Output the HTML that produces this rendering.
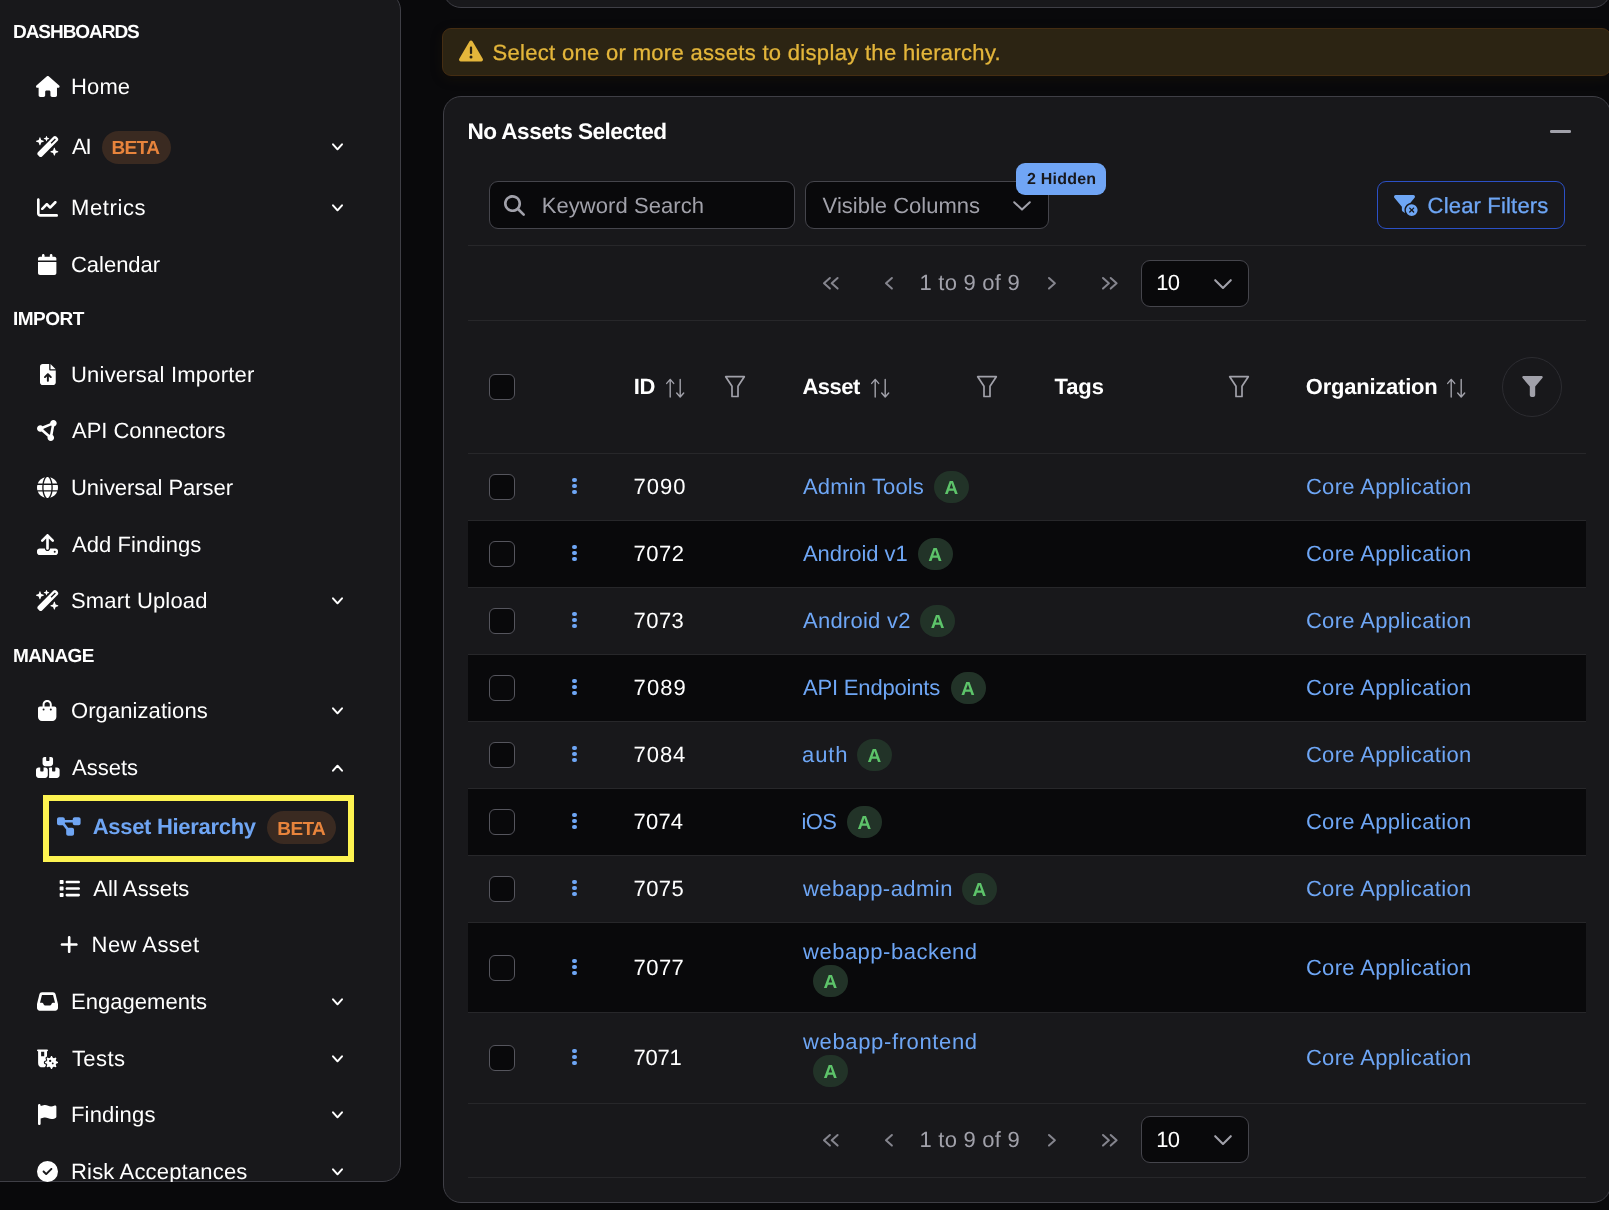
<!DOCTYPE html>
<html lang="en">
<head>
<meta charset="utf-8">
<title>Asset Hierarchy</title>
<style>
*{box-sizing:border-box;margin:0;padding:0}
html,body{width:1609px;height:1210px;overflow:hidden;background:#09090b}
body{position:relative;text-rendering:geometricPrecision;font-family:"Liberation Sans",Arial,sans-serif;color:#fff;font-size:22px}
a{color:inherit;text-decoration:none}
svg{display:block;overflow:visible}
#app{position:absolute;left:0;top:0;width:1609px;height:1210px;overflow:hidden;will-change:transform}
.abs{position:absolute}
/* ---------- sidebar ---------- */
#side{position:absolute;left:-2px;top:-8px;width:403px;height:1190px;background:#18181b;border:1px solid #3f3f46;border-radius:0 18px 18px 0}
.sec{position:absolute;left:13px;height:30px;line-height:30px;font-weight:700;font-size:19px;color:#fff;white-space:nowrap}
.ni{position:absolute;left:0;width:400px;height:40px;display:block;color:#fff;white-space:nowrap}
.ni .ic{position:absolute;left:34.5px;top:8px;width:26px;height:22px;display:flex;align-items:center;justify-content:center}
.ni .tx{position:absolute;left:71px;top:0;height:40px;line-height:40px}
.ni .chev{position:absolute;left:332px;top:15.5px}
.ni.sub .ic{left:56px}
.ni.sub .tx{left:92.6px}
.beta{position:absolute;top:4px;height:33px;width:68.5px;border-radius:17px;background:#3a2a21;color:#e8843c;font-weight:700;font-size:19px;line-height:35px;white-space:nowrap}
#hl{position:absolute;left:43px;top:795px;width:311px;height:67px;border:6px solid #fdf351}
/* ---------- main ---------- */
.card{position:absolute;background:#18181b;border:1px solid #3f3f46;border-radius:18px}
#warn{position:absolute;left:442px;top:28px;width:1169px;height:48px;background:#2c2413;border:1px solid #452d12;border-radius:9px;color:#e4b63b;box-shadow:0 3px 12px rgba(40,28,8,.28)}
.hr{position:absolute;left:468px;width:1118px;height:1px;background:#27272a}
.inp{position:absolute;background:#09090b;border:1px solid #45454c;border-radius:9px}
.t{position:absolute;white-space:nowrap;height:40px;line-height:40px}
.mut{color:#a1a1aa}
.lnk{color:#6ea6f5}
.b{font-weight:700}
.med{-webkit-text-stroke:0.3px currentColor}
.row{position:absolute;left:468px;width:1118px;border-bottom:1px solid #27272a}
.row.alt{background:#09090b}
.cb{position:absolute;left:21px;width:26px;height:26px;border:1px solid #55555d;border-radius:6px;background:#09090b}
.dots{position:absolute;left:103.5px;width:6px;height:17px}
.dots i{display:block;width:4.4px;height:4.4px;border-radius:2.2px;background:#6ea6f5;margin:0 0.8px 1.4px}
.ab{position:absolute;width:35px;height:32px;border-radius:16px;background:#223328;color:#5dc46a;font-weight:700;font-size:19px;line-height:36px;white-space:nowrap}
</style>
</head>
<body>
<div id="app">
<aside id="sidebar"><nav>
<div id="side"></div>
<div class="sec" style="top:18px"><span style="letter-spacing:-1.042px">DASHBOARDS</span></div>
<a class="ni" style="top:67px"><span class="ic"><svg width="23.62" height="21" viewBox="0 0 576 512" fill="currentColor"><path fill-rule="evenodd" d="M575.8 255.5c0 18-15 32.100-32 32.100h-32l.7 160.200c0 2.700-.2 5.400-.5 8.100V472c0 22.100-17.900 40-40 40H456c-1.100 0-2.200 0-3.300-.1c-1.400 .1-2.800 .1-4.200 .1H416 392c-22.100 0-40-17.900-40-40V448 384c0-17.700-14.300-32-32-32H256c-17.700 0-32 14.300-32 32v64 24c0 22.100-17.900 40-40 40H160 128.100c-1.500 0-3-.1-4.500-.2c-1.200 .1-2.400 .2-3.600 .2H104c-22.100 0-40-17.900-40-40V360c0-.9 0-1.900 .1-2.800V287.600H32c-18 0-32-14-32-32.100c0-9 3-17 10-24L266.400 8c7-7 15-8 22-8s15 2 21 7L564.800 231.500c8 7 12 15 11 24z"/></svg></span><span class="tx"><span style="letter-spacing:0.132px">Home</span></span></a>
<a class="ni" style="top:127px"><span class="ic"><svg width="23.62" height="21" viewBox="0 0 576 512" fill="currentColor"><path fill-rule="evenodd" d="M234.700 42.700L197 56.800c-3 1.100-5 4-5 7.200s2 6.100 5 7.200l37.700 14.100L248.800 123c1.100 3 4 5 7.200 5s6.100-2 7.200-5l14.100-37.700L315 71.200c3-1.100 5-4 5-7.200s-2-6.100-5-7.200L277.300 42.700 263.200 5c-1.100-3-4-5-7.200-5s-6.100 2-7.200 5L234.700 42.700zM46.100 395.400c-18.700 18.700-18.700 49.100 0 67.900l34.600 34.600c18.700 18.700 49.100 18.700 67.900 0L529.900 116.500c18.700-18.700 18.700-49.100 0-67.900L495.300 14.100c-18.700-18.700-49.100-18.700-67.900 0L46.100 395.400zM484.600 82.600l-105 105-23.300-23.300 105-105 23.300 23.300zM7.500 117.200C3 118.900 0 123.200 0 128s3 9.100 7.500 10.800L64 160l21.200 56.500c1.700 4.500 6 7.500 10.800 7.500s9.100-3 10.800-7.500L128 160l56.500-21.200c4.500-1.700 7.500-6 7.500-10.800s-3-9.100-7.500-10.800L128 96 106.800 39.500C105.100 35 100.800 32 96 32s-9.100 3-10.800 7.500L64 96 7.500 117.200zm352 256c-4.500 1.700-7.500 6-7.500 10.800s3 9.100 7.500 10.800L416 416l21.200 56.500c1.700 4.500 6 7.500 10.800 7.500s9.100-3 10.800-7.500L480 416l56.500-21.200c4.500-1.700 7.500-6 7.500-10.800s-3-9.100-7.500-10.800L480 352l-21.200-56.500c-1.700-4.500-6-7.500-10.800-7.500s-9.100 3-10.800 7.500L416 352l-56.500 21.200z"/></svg></span><span class="tx"><span style="letter-spacing:-1.324px;margin-left:1.06px">AI</span></span><span class="beta" style="left:102px;line-height:35px"><span style="letter-spacing:-0.647px;margin-left:9.53px">BETA</span></span><svg class="chev" width="11" height="8" viewBox="0 0 11 8" fill="none" stroke="currentColor" stroke-width="2" stroke-linecap="round" stroke-linejoin="round"><path d="M1 1.3 L5.5 6.3 L10 1.3"/></svg></a>
<a class="ni" style="top:188px"><span class="ic"><svg width="21.00" height="21" viewBox="0 0 512 512" fill="currentColor"><path fill-rule="evenodd" d="M64 64c0-17.700-14.300-32-32-32S0 46.300 0 64V400c0 44.200 35.800 80 80 80H480c17.700 0 32-14.300 32-32s-14.300-32-32-32H80c-8.800 0-16-7.200-16-16V64zm406.600 86.600c12.500-12.500 12.500-32.800 0-45.300s-32.800-12.500-45.300 0L320 210.700l-57.400-57.400c-12.500-12.500-32.800-12.500-45.300 0l-112 112c-12.500 12.500-12.500 32.800 0 45.300s32.800 12.500 45.300 0L240 221.300l57.400 57.400c12.500 12.500 32.800 12.500 45.300 0l128-128z"/></svg></span><span class="tx"><span style="letter-spacing:0.618px">Metrics</span></span><svg class="chev" width="11" height="8" viewBox="0 0 11 8" fill="none" stroke="currentColor" stroke-width="2" stroke-linecap="round" stroke-linejoin="round"><path d="M1 1.3 L5.5 6.3 L10 1.3"/></svg></a>
<a class="ni" style="top:245px"><span class="ic"><svg width="18.38" height="21" viewBox="0 0 448 512" fill="currentColor"><path fill-rule="evenodd" d="M96 32V64H48C21.500 64 0 85.500 0 112v48H448V112c0-26.500-21.500-48-48-48H352V32c0-17.700-14.300-32-32-32s-32 14.300-32 32V64H160V32c0-17.700-14.300-32-32-32S96 14.300 96 32zM448 192H0V464c0 26.500 21.500 48 48 48H400c26.500 0 48-21.500 48-48V192z"/></svg></span><span class="tx"><span style="letter-spacing:-0.028px">Calendar</span></span></a>
<div class="sec" style="top:305px"><span style="letter-spacing:-0.523px">IMPORT</span></div>
<a class="ni" style="top:355px"><span class="ic"><svg width="15.75" height="21" viewBox="0 0 384 512" fill="currentColor"><path fill-rule="evenodd" d="M64 0C28.700 0 0 28.700 0 64V448c0 35.300 28.700 64 64 64H320c35.300 0 64-28.700 64-64V160H256c-17.700 0-32-14.300-32-32V0H64zM256 0V128H384L256 0zM216 408c0 13.300-10.700 24-24 24s-24-10.700-24-24V305.900l-31 31c-9.400 9.400-24.600 9.400-33.900 0s-9.400-24.600 0-33.900l72-72c9.400-9.400 24.600-9.400 33.900 0l72 72c9.400 9.400 9.400 24.600 0 33.900s-24.600 9.400-33.900 0l-31-31V408z"/></svg></span><span class="tx"><span style="letter-spacing:0.208px">Universal Importer</span></span></a>
<a class="ni" style="top:411px"><span class="ic"><svg width="21.00" height="21" viewBox="0 0 512 512" fill="currentColor"><path fill-rule="evenodd" d="M418.400 157.900c35.300-8.300 61.600-40 61.600-77.900c0-44.200-35.800-80-80-80c-43.400 0-78.700 34.500-80 77.500L136.200 151.100C121.700 136.800 101.900 128 80 128c-44.200 0-80 35.800-80 80s35.800 80 80 80c12.200 0 23.800-2.700 34.100-7.600L259.700 407.800c-2.400 7.600-3.700 15.800-3.700 24.200c0 44.200 35.800 80 80 80s80-35.800 80-80c0-27.700-14-52.100-35.400-66.400l37.800-207.700zM156.300 232.200c2.200-6.900 3.500-14.200 3.700-21.700l183.800-73.500c3.600 3.500 7.400 6.700 11.600 9.500L317.600 354.100c-5.500 1.300-10.800 3.100-15.800 5.500L156.300 232.200z"/></svg></span><span class="tx"><span style="letter-spacing:-0.042px;margin-left:1.06px">API Connectors</span></span></a>
<a class="ni" style="top:468px"><span class="ic"><svg width="21.00" height="21" viewBox="0 0 512 512" fill="currentColor"><path fill-rule="evenodd" d="M352 256c0 22.200-1.200 43.600-3.300 64H163.300c-2.200-20.400-3.300-41.800-3.300-64s1.200-43.600 3.300-64H348.700c2.200 20.400 3.300 41.800 3.300 64zm28.800-64H503.900c5.300 20.500 8.100 41.900 8.100 64s-2.800 43.500-8.100 64H380.800c2.100-20.600 3.200-42 3.200-64s-1.100-43.400-3.200-64zm112.600-32H376.700c-10-63.900-29.800-117.400-55.300-151.600c78.300 20.700 142 77.500 171.900 151.600zm-149.100 0H167.700c6.100-36.400 15.500-68.600 27-94.700c10.500-23.600 22.200-40.700 33.500-51.500C239.400 3.200 248.700 0 256 0s16.600 3.200 27.800 13.800c11.300 10.800 23 27.900 33.500 51.500c11.600 26 20.900 58.200 27 94.700zm-209 0H18.600C48.600 85.900 112.200 29.100 190.600 8.400C165.100 42.600 145.300 96.100 135.300 160zM8.100 192H131.200c-2.100 20.600-3.200 42-3.200 64s1.100 43.400 3.200 64H8.100C2.800 299.500 0 278.100 0 256s2.800-43.500 8.100-64zM194.700 446.600c-11.600-26-20.900-58.200-27-94.600H344.300c-6.100 36.400-15.500 68.600-27 94.600c-10.500 23.600-22.200 40.700-33.500 51.500C272.600 508.800 263.300 512 256 512s-16.600-3.200-27.800-13.800c-11.300-10.800-23-27.900-33.500-51.500zM135.300 352c10 63.900 29.800 117.400 55.300 151.600C112.200 482.900 48.600 426.100 18.600 352H135.300zm358.100 0c-30 74.100-93.600 130.900-171.900 151.600c25.500-34.200 45.200-87.700 55.300-151.600H493.400z"/></svg></span><span class="tx"><span style="letter-spacing:-0.036px">Universal Parser</span></span></a>
<a class="ni" style="top:525px"><span class="ic"><svg width="21.00" height="21" viewBox="0 0 512 512" fill="currentColor"><path fill-rule="evenodd" d="M288 109.300V352c0 17.700-14.300 32-32 32s-32-14.300-32-32V109.300l-73.400 73.400c-12.500 12.500-32.800 12.500-45.300 0s-12.500-32.800 0-45.300l128-128c12.500-12.500 32.800-12.500 45.300 0l128 128c12.500 12.500 12.500 32.800 0 45.300s-32.800 12.500-45.300 0L288 109.300zM64 352H192c0 35.300 28.700 64 64 64s64-28.700 64-64H448c35.300 0 64 28.700 64 64v32c0 35.300-28.700 64-64 64H64c-35.300 0-64-28.700-64-64V416c0-35.300 28.700-64 64-64zM432 456a24 24 0 1 0 0-48 24 24 0 1 0 0 48z"/></svg></span><span class="tx"><span style="letter-spacing:0.074px;margin-left:1.06px">Add Findings</span></span></a>
<a class="ni" style="top:581px"><span class="ic"><svg width="23.62" height="21" viewBox="0 0 576 512" fill="currentColor"><path fill-rule="evenodd" d="M234.700 42.700L197 56.800c-3 1.100-5 4-5 7.200s2 6.100 5 7.200l37.700 14.100L248.800 123c1.100 3 4 5 7.200 5s6.100-2 7.200-5l14.100-37.700L315 71.200c3-1.100 5-4 5-7.200s-2-6.100-5-7.200L277.300 42.700 263.200 5c-1.100-3-4-5-7.200-5s-6.100 2-7.200 5L234.700 42.700zM46.100 395.400c-18.700 18.700-18.700 49.100 0 67.900l34.600 34.600c18.700 18.700 49.100 18.700 67.900 0L529.900 116.500c18.700-18.700 18.700-49.100 0-67.900L495.300 14.100c-18.700-18.700-49.100-18.700-67.900 0L46.100 395.400zM484.600 82.600l-105 105-23.300-23.300 105-105 23.300 23.300zM7.500 117.200C3 118.900 0 123.200 0 128s3 9.100 7.500 10.800L64 160l21.200 56.500c1.700 4.500 6 7.500 10.800 7.500s9.100-3 10.800-7.500L128 160l56.500-21.200c4.500-1.700 7.500-6 7.500-10.800s-3-9.100-7.500-10.800L128 96 106.800 39.500C105.100 35 100.800 32 96 32s-9.100 3-10.800 7.500L64 96 7.500 117.200zm352 256c-4.500 1.700-7.500 6-7.500 10.800s3 9.100 7.500 10.800L416 416l21.200 56.500c1.700 4.500 6 7.500 10.800 7.500s9.100-3 10.800-7.500L480 416l56.500-21.200c4.500-1.700 7.500-6 7.500-10.800s-3-9.100-7.500-10.800L480 352l-21.200-56.500c-1.700-4.500-6-7.500-10.800-7.500s-9.100 3-10.800 7.500L416 352l-56.500 21.200z"/></svg></span><span class="tx"><span style="letter-spacing:0.182px">Smart Upload</span></span><svg class="chev" width="11" height="8" viewBox="0 0 11 8" fill="none" stroke="currentColor" stroke-width="2" stroke-linecap="round" stroke-linejoin="round"><path d="M1 1.3 L5.5 6.3 L10 1.3"/></svg></a>
<div class="sec" style="top:642px"><span style="letter-spacing:-0.628px">MANAGE</span></div>
<a class="ni" style="top:691px"><span class="ic"><svg width="18.38" height="21" viewBox="0 0 448 512" fill="currentColor"><path fill-rule="evenodd" d="M160 112c0-35.300 28.700-64 64-64s64 28.700 64 64v48H160V112zm-48 48H48c-26.500 0-48 21.500-48 48V416c0 53 43 96 96 96H352c53 0 96-43 96-96V208c0-26.500-21.500-48-48-48H336V112C336 50.100 285.900 0 224 0S112 50.100 112 112v48zm24 48a24 24 0 1 1 0 48 24 24 0 1 1 0-48zm152 24a24 24 0 1 1 48 0 24 24 0 1 1 -48 0z"/></svg></span><span class="tx"><span style="letter-spacing:0.082px">Organizations</span></span><svg class="chev" width="11" height="8" viewBox="0 0 11 8" fill="none" stroke="currentColor" stroke-width="2" stroke-linecap="round" stroke-linejoin="round"><path d="M1 1.3 L5.5 6.3 L10 1.3"/></svg></a>
<a class="ni" style="top:748px"><span class="ic"><svg width="23.62" height="21" viewBox="0 0 576 512" fill="currentColor"><path fill-rule="evenodd" d="M248 0H208c-26.500 0-48 21.500-48 48V160c0 35.300 28.700 64 64 64H352c35.300 0 64-28.700 64-64V48c0-26.500-21.500-48-48-48H328V80c0 8.800-7.200 16-16 16H264c-8.800 0-16-7.200-16-16V0zM64 256c-35.300 0-64 28.700-64 64V448c0 35.300 28.700 64 64 64H224c35.300 0 64-28.700 64-64V320c0-35.300-28.700-64-64-64H184v80c0 8.800-7.200 16-16 16H120c-8.800 0-16-7.200-16-16V256H64zM352 512H512c35.300 0 64-28.700 64-64V320c0-35.300-28.700-64-64-64H472v80c0 8.800-7.200 16-16 16H408c-8.800 0-16-7.200-16-16V256H352c-15 0-28.800 5.100-39.700 13.800c4.900 10.400 7.700 22 7.700 34.200V464c0 12.200-2.800 23.800-7.700 34.200C323.200 506.900 337 512 352 512z"/></svg></span><span class="tx"><span style="letter-spacing:0.001px;margin-left:1.06px">Assets</span></span><svg class="chev" width="11" height="8" viewBox="0 0 11 8" fill="none" stroke="currentColor" stroke-width="2" stroke-linecap="round" stroke-linejoin="round"><path d="M1 6.7 L5.5 1.7 L10 6.7"/></svg></a>
<div id="hl"></div>
<a class="ni sub" style="top:807px;color:#6fa5f3"><span class="ic"><svg width="23.62" height="21" viewBox="0 0 576 512" fill="currentColor"><path fill-rule="evenodd" d="M0 80C0 53.500 21.500 32 48 32h96c26.500 0 48 21.500 48 48V96H384V80c0-26.500 21.500-48 48-48h96c26.500 0 48 21.500 48 48v96c0 26.500-21.500 48-48 48H432c-26.500 0-48-21.500-48-48V160H192v16c0 1.700-.1 3.400-.3 5L272 288h96c26.500 0 48 21.500 48 48v96c0 26.500-21.500 48-48 48H272c-26.500 0-48-21.500-48-48V336c0-1.700 .1-3.400 .3-5L144 224H48c-26.500 0-48-21.500-48-48V80z"/></svg></span><span class="tx b"><span style="letter-spacing:-0.291px;margin-left:0.06px">Asset Hierarchy</span></span><span class="beta" style="left:267px;line-height:37px"><span style="letter-spacing:-0.647px;margin-left:10.33px">BETA</span></span></a>
<a class="ni sub" style="top:869px"><span class="ic"><svg width="21.00" height="21" viewBox="0 0 512 512" fill="currentColor"><path fill-rule="evenodd" d="M40 48C26.700 48 16 58.700 16 72v48c0 13.300 10.700 24 24 24H88c13.300 0 24-10.700 24-24V72c0-13.300-10.700-24-24-24H40zM192 64c-17.700 0-32 14.300-32 32s14.300 32 32 32H480c17.700 0 32-14.300 32-32s-14.300-32-32-32H192zm0 160c-17.700 0-32 14.300-32 32s14.300 32 32 32H480c17.700 0 32-14.300 32-32s-14.300-32-32-32H192zm0 160c-17.700 0-32 14.300-32 32s14.300 32 32 32H480c17.700 0 32-14.300 32-32s-14.300-32-32-32H192zM16 232v48c0 13.300 10.700 24 24 24H88c13.300 0 24-10.700 24-24V232c0-13.300-10.700-24-24-24H40c-13.300 0-24 10.700-24 24zM40 368c-13.300 0-24 10.700-24 24v48c0 13.300 10.700 24 24 24H88c13.300 0 24-10.700 24-24V392c0-13.300-10.700-24-24-24H40z"/></svg></span><span class="tx"><span style="letter-spacing:0.096px;margin-left:0.56px">All Assets</span></span></a>
<a class="ni sub" style="top:925px"><span class="ic"><svg width="18.38" height="21" viewBox="0 0 448 512" fill="currentColor"><path fill-rule="evenodd" d="M256 80c0-17.700-14.300-32-32-32s-32 14.300-32 32V224H48c-17.700 0-32 14.300-32 32s14.300 32 32 32H192V432c0 17.700 14.300 32 32 32s32-14.300 32-32V288H400c17.700 0 32-14.300 32-32s-14.300-32-32-32H256V80z"/></svg></span><span class="tx"><span style="letter-spacing:0.441px;margin-left:-1.00px">New Asset</span></span></a>
<a class="ni" style="top:982px"><span class="ic"><svg width="21.00" height="21" viewBox="0 0 512 512" fill="currentColor"><path fill-rule="evenodd" d="M121 32C91.600 32 66 52 58.900 80.500L1.900 308.400C.6 313.500 0 318.700 0 323.900V416c0 35.300 28.700 64 64 64H448c35.300 0 64-28.700 64-64V323.900c0-5.200-.6-10.400-1.900-15.500l-57-227.900C446 52 420.400 32 391 32H121zm0 64H391l48 192H387.800c-12.100 0-23.200 6.800-28.600 17.700l-14.300 28.600c-5.400 10.800-16.500 17.700-28.600 17.700H195.800c-12.100 0-23.200-6.800-28.600-17.700l-14.300-28.600c-5.400-10.800-16.500-17.700-28.600-17.700H73L121 96z"/></svg></span><span class="tx"><span style="letter-spacing:0.033px">Engagements</span></span><svg class="chev" width="11" height="8" viewBox="0 0 11 8" fill="none" stroke="currentColor" stroke-width="2" stroke-linecap="round" stroke-linejoin="round"><path d="M1 1.3 L5.5 6.3 L10 1.3"/></svg></a>
<a class="ni" style="top:1039px"><span class="ic"><svg width="21" height="21" viewBox="0 0 512 512"><path fill="currentColor" fill-rule="evenodd" d="M22 34 H246 Q268 34 268 56 Q268 78 246 78 H244 V364 Q244 472 136 472 Q27 472 27 364 V78 H22 Q0 78 0 56 Q0 34 22 34 Z M100 92 V202 H176 V92 Z"/><path fill="currentColor" stroke="#18181b" stroke-width="56" stroke-linejoin="round" paint-order="stroke" d="M343 194 L365 194 L395 254 L458 233 L473 248 L452 311 L512 341 L512 363 L452 393 L473 456 L458 471 L395 450 L365 510 L343 510 L313 450 L250 471 L235 456 L256 393 L196 363 L196 341 L256 311 L235 248 L250 233 L313 254 Z"/><circle cx="354" cy="352" r="112" fill="currentColor"/><circle cx="321" cy="314" r="28" fill="#18181b"/><circle cx="384" cy="375" r="22" fill="#18181b"/></svg></span><span class="tx"><span style="letter-spacing:0.432px;margin-left:0.91px">Tests</span></span><svg class="chev" width="11" height="8" viewBox="0 0 11 8" fill="none" stroke="currentColor" stroke-width="2" stroke-linecap="round" stroke-linejoin="round"><path d="M1 1.3 L5.5 6.3 L10 1.3"/></svg></a>
<a class="ni" style="top:1095px"><span class="ic"><svg width="18.38" height="21" viewBox="0 0 448 512" fill="currentColor"><path fill-rule="evenodd" d="M64 32C64 14.300 49.700 0 32 0S0 14.300 0 32V64 368 480c0 17.700 14.300 32 32 32s32-14.300 32-32V352l64.300-16.100c41.100-10.300 84.600-5.500 122.500 13.400c44.200 22.100 95.500 24.800 141.700 7.400l34.700-13c12.500-4.700 20.800-16.600 20.800-30V66.100c0-23-24.200-38-44.800-27.700l-9.600 4.800c-46.300 23.200-100.800 23.200-147.100 0c-35.100-17.600-75.400-22-113.500-12.500L64 48V32z"/></svg></span><span class="tx"><span style="letter-spacing:0.178px">Findings</span></span><svg class="chev" width="11" height="8" viewBox="0 0 11 8" fill="none" stroke="currentColor" stroke-width="2" stroke-linecap="round" stroke-linejoin="round"><path d="M1 1.3 L5.5 6.3 L10 1.3"/></svg></a>
<a class="ni" style="top:1152px"><span class="ic"><svg width="21.00" height="21" viewBox="0 0 512 512" fill="currentColor"><path fill-rule="evenodd" d="M256 512A256 256 0 1 0 256 0a256 256 0 1 0 0 512zM369 209L241 337c-9.400 9.400-24.600 9.400-33.900 0l-64-64c-9.400-9.400-9.400-24.600 0-33.900s24.600-9.400 33.900 0l47 47L335 175c9.400-9.400 24.600-9.400 33.900 0s9.400 24.600 0 33.900z"/></svg></span><span class="tx"><span style="letter-spacing:0.177px">Risk Acceptances</span></span><svg class="chev" width="11" height="8" viewBox="0 0 11 8" fill="none" stroke="currentColor" stroke-width="2" stroke-linecap="round" stroke-linejoin="round"><path d="M1 1.3 L5.5 6.3 L10 1.3"/></svg></a>
<div class="abs" style="left:0;top:1182px;width:430px;height:28px;background:#09090b"></div>

</nav></aside>
<main>
<div class="card" style="left:443px;top:-40px;width:1168px;height:48px"></div>
<div id="warn"></div>
<span class="abs" style="left:458.8px;top:39.3px;color:#e4b63b"><svg width="24.00" height="24" viewBox="0 0 512 512" fill="currentColor"><path fill-rule="evenodd" d="M256 32c14.200 0 27.300 7.500 34.500 19.800l216 368c7.300 12.400 7.300 27.700 .2 40.100S486.300 480 472 480H40c-14.300 0-27.600-7.700-34.700-20.100s-7-27.800 .2-40.100l216-368C228.700 39.500 241.800 32 256 32zm0 128c-13.300 0-24 10.700-24 24V296c0 13.300 10.700 24 24 24s24-10.700 24-24V184c0-13.300-10.700-24-24-24zm32 224a32 32 0 1 0 -64 0 32 32 0 1 0 64 0z"/></svg></span>
<span class="t med" style="left:492px;top:33px;color:#e4b63b"><span style="letter-spacing:0.316px;margin-left:0.50px">Select one or more assets to display the hierarchy.</span></span>
<div class="card" style="left:443px;top:96px;width:1168px;height:1107px"></div>
<span class="t b" style="left:467px;top:112px;font-size:22.6px"><span style="letter-spacing:-0.534px;margin-left:0.39px">No Assets Selected</span></span>
<div class="abs" style="left:1550px;top:130px;width:21px;height:2.5px;border-radius:1.2px;background:#a1a1aa"></div>
<div class="inp" style="left:489px;top:181px;width:306px;height:48px"></div>
<span class="abs mut" style="left:504.4px;top:194.6px"><svg width="21.00" height="21" viewBox="0 0 512 512" fill="currentColor"><path fill-rule="evenodd" d="M416 208c0 45.900-14.900 88.300-40 122.700L502.600 457.400c12.500 12.500 12.500 32.800 0 45.300s-32.800 12.500-45.300 0L330.700 376c-34.400 25.200-76.800 40-122.700 40C93.100 416 0 322.900 0 208S93.100 0 208 0S416 93.100 416 208zM208 352a144 144 0 1 0 0-288 144 144 0 1 0 0 288z"/></svg></span>
<span class="t mut" style="left:542px;top:186px"><span style="letter-spacing:0.070px;margin-left:-0.30px">Keyword Search</span></span>
<div class="inp" style="left:805px;top:181.3px;width:244px;height:48.2px"></div>
<span class="t mut" style="left:822px;top:186px"><span style="letter-spacing:0.011px;margin-left:0.60px">Visible Columns</span></span>
<svg class="abs" style="left:1012.5px;top:201px" width="18" height="10" viewBox="0 0 18 10" fill="none" stroke="#a1a1aa" stroke-width="2" stroke-linecap="round" stroke-linejoin="round"><path d="M1.2 1.2 L9 8.6 L16.8 1.2"/></svg>
<div class="abs" style="left:1016px;top:163px;width:90px;height:32px;border-radius:9px;background:#70a5f5"></div>
<span class="t b" style="left:1027px;top:160px;font-size:16px;color:#18181b"><span style="letter-spacing:0.212px;margin-left:0.05px">2 Hidden</span></span>
<div class="abs" style="left:1377px;top:181px;width:188px;height:48.4px;border:1px solid #2b50c6;border-radius:9px"></div>
<span class="abs" style="left:1393.6px;top:194.7px;color:#6ea6f5"><svg width="23.62" height="21" viewBox="0 0 576 512" fill="currentColor"><path fill-rule="evenodd" d="M3.900 22.900C10.500 8.900 24.500 0 40 0H472c15.500 0 29.500 8.900 36.100 22.900s4.600 30.500-5.200 42.500L396.400 195.600C316.200 212.100 256 283 256 368c0 27.400 6.300 53.400 17.500 76.500c-1.600-.8-3.200-1.800-4.700-2.900l-64-48c-8.100-6-12.800-15.500-12.800-25.600V288.900L9 65.300C-.7 53.400-2.800 36.800 3.900 22.900zM432 224a144 144 0 1 1 0 288 144 144 0 1 1 0-288zm59.300 107.300c6.200-6.200 6.200-16.400 0-22.600s-16.400-6.200-22.600 0L432 345.400l-36.700-36.700c-6.200-6.200-16.400-6.200-22.600 0s-6.200 16.400 0 22.600L409.400 368l-36.700 36.700c-6.200 6.200-6.200 16.400 0 22.600s16.400 6.200 22.600 0L432 390.600l36.700 36.700c6.200 6.200 16.400 6.200 22.600 0s6.200-16.400 0-22.600L454.600 368l36.700-36.700z"/></svg></span>
<span class="t med" style="left:1428px;top:186px;color:#6ea6f5"><span style="letter-spacing:0.178px;margin-left:-0.42px">Clear Filters</span></span>
<div class="hr" style="top:245px"></div>

<svg class="abs" style="left:822.7px;top:277.4px" width="15.6" height="12.6" viewBox="0 0 15.6 12.6" fill="none" stroke="#85858e" stroke-width="2" stroke-linecap="round" stroke-linejoin="round"><path d="M6.9 1 L1 6.3 L6.9 11.6 M14.6 1 L8.7 6.3 L14.6 11.6"/></svg>
<svg class="abs" style="left:884.6px;top:277.4px" width="7.9" height="12.6" viewBox="0 0 7.9 12.6" fill="none" stroke="#85858e" stroke-width="2" stroke-linecap="round" stroke-linejoin="round"><path d="M6.9 1 L1 6.3 L6.9 11.6"/></svg>
<span class="t mut" style="left:919px;top:263px"><span style="letter-spacing:0.256px;margin-left:0.42px">1 to 9 of 9</span></span>
<svg class="abs" style="left:1047.6px;top:277.4px" width="7.9" height="12.6" viewBox="0 0 7.9 12.6" fill="none" stroke="#85858e" stroke-width="2" stroke-linecap="round" stroke-linejoin="round"><path d="M1 1 L6.9 6.3 L1 11.6"/></svg>
<svg class="abs" style="left:1101.8px;top:277.4px" width="15.6" height="12.6" viewBox="0 0 15.6 12.6" fill="none" stroke="#85858e" stroke-width="2" stroke-linecap="round" stroke-linejoin="round"><path d="M1 1 L6.9 6.3 L1 11.6 M8.7 1 L14.6 6.3 L8.7 11.6"/></svg>
<div class="inp" style="left:1141px;top:259.7px;width:108px;height:47px"></div>
<span class="t" style="left:1156px;top:263px"><span style="letter-spacing:-0.749px;margin-left:0.32px">10</span></span>
<svg class="abs" style="left:1213.5px;top:278.9px" width="18" height="10.4" viewBox="0 0 18 10.4" fill="none" stroke="#a1a1aa" stroke-width="2.1" stroke-linecap="round" stroke-linejoin="round"><path d="M1.2 1.2 L9 9 L16.8 1.2"/></svg>
<div class="hr" style="top:320px"></div>
<div class="cb" style="left:489px;top:374px"></div>
<span class="t b" style="left:634px;top:367px"><span style="letter-spacing:-0.504px;margin-left:-0.17px">ID</span></span><svg class="abs" style="left:666px;top:378px" width="19" height="20" viewBox="0 0 19 20" fill="none" stroke="#a1a1aa" stroke-width="1.4" stroke-linecap="round" stroke-linejoin="round"><path d="M4.2 19 V1.6 M0.7 5.4 L4.2 1.4 L7.7 5.4"/><path d="M14.2 1.4 V18.8 M10.7 15 L14.2 19 L17.7 15"/></svg>
<svg class="abs" style="left:723.9px;top:375px" width="22" height="23" viewBox="0 0 22 23" fill="none" stroke="#a1a1aa" stroke-width="1.7" stroke-linejoin="round"><path d="M1.7 1.7 H20.3 L14 11.3 V21.5 H8 V11.3 Z"/></svg>
<span class="t b" style="left:802.5px;top:367px"><span style="letter-spacing:-0.526px;margin-left:-0.05px">Asset</span></span><svg class="abs" style="left:871px;top:378px" width="19" height="20" viewBox="0 0 19 20" fill="none" stroke="#a1a1aa" stroke-width="1.4" stroke-linecap="round" stroke-linejoin="round"><path d="M4.2 19 V1.6 M0.7 5.4 L4.2 1.4 L7.7 5.4"/><path d="M14.2 1.4 V18.8 M10.7 15 L14.2 19 L17.7 15"/></svg>
<svg class="abs" style="left:976.3px;top:375px" width="22" height="23" viewBox="0 0 22 23" fill="none" stroke="#a1a1aa" stroke-width="1.7" stroke-linejoin="round"><path d="M1.7 1.7 H20.3 L14 11.3 V21.5 H8 V11.3 Z"/></svg>
<span class="t b" style="left:1054.5px;top:367px"><span style="letter-spacing:-0.090px;margin-left:-0.05px">Tags</span></span>
<svg class="abs" style="left:1228px;top:375px" width="22" height="23" viewBox="0 0 22 23" fill="none" stroke="#a1a1aa" stroke-width="1.7" stroke-linejoin="round"><path d="M1.7 1.7 H20.3 L14 11.3 V21.5 H8 V11.3 Z"/></svg>
<span class="t b" style="left:1306px;top:367px"><span style="letter-spacing:-0.235px;margin-left:-0.20px">Organization</span></span><svg class="abs" style="left:1447px;top:378px" width="19" height="20" viewBox="0 0 19 20" fill="none" stroke="#a1a1aa" stroke-width="1.4" stroke-linecap="round" stroke-linejoin="round"><path d="M4.2 19 V1.6 M0.7 5.4 L4.2 1.4 L7.7 5.4"/><path d="M14.2 1.4 V18.8 M10.7 15 L14.2 19 L17.7 15"/></svg>
<div class="abs" style="left:1502px;top:357px;width:60px;height:60px;border-radius:30px;border:1px solid #2c2c31"></div>
<svg class="abs" style="left:1522px;top:376px" width="21" height="21" viewBox="0 0 21 21" fill="#a1a1aa"><path d="M1.2 0 H19.8 Q21.4 0.6 20.4 2 L13.2 10.4 V19.2 Q13 21 11.4 21 H9.6 Q8 21 7.8 19.2 V10.4 L0.6 2 Q-0.4 0.6 1.2 0 Z"/></svg>
<div class="hr" style="top:453px"></div>
<div class="row" style="top:454px;height:67px"><div class="cb" style="top:19.5px"></div><div class="dots" style="top:24px"><i></i><i></i><i></i></div><span class="t" style="left:166px;top:13px"><span style="letter-spacing:0.978px;margin-left:-0.43px">7090</span></span><a class="t lnk" style="left:335px;top:13px"><span style="letter-spacing:0.140px;margin-left:-0.04px">Admin Tools</span></a><span class="ab" style="left:466.0px;top:17px"><span style="letter-spacing:0.440px;margin-left:10.43px">A</span></span><a class="t lnk" style="left:838.5px;top:13px"><span style="letter-spacing:0.342px;margin-left:-0.62px">Core Application</span></a></div>
<div class="row alt" style="top:521px;height:67px"><div class="cb" style="top:19.5px"></div><div class="dots" style="top:24px"><i></i><i></i><i></i></div><span class="t" style="left:166px;top:13px"><span style="letter-spacing:0.460px;margin-left:-0.43px">7072</span></span><a class="t lnk" style="left:335px;top:13px"><span style="letter-spacing:-0.041px;margin-left:-0.04px">Android v1</span></a><span class="ab" style="left:449.7px;top:17px"><span style="letter-spacing:0.440px;margin-left:10.44px">A</span></span><a class="t lnk" style="left:838.5px;top:13px"><span style="letter-spacing:0.342px;margin-left:-0.62px">Core Application</span></a></div>
<div class="row" style="top:588px;height:67px"><div class="cb" style="top:19.5px"></div><div class="dots" style="top:24px"><i></i><i></i><i></i></div><span class="t" style="left:166px;top:13px"><span style="letter-spacing:0.414px;margin-left:-0.43px">7073</span></span><a class="t lnk" style="left:335px;top:13px"><span style="letter-spacing:0.251px;margin-left:-0.04px">Android v2</span></a><span class="ab" style="left:452.3px;top:17px"><span style="letter-spacing:0.440px;margin-left:10.43px">A</span></span><a class="t lnk" style="left:838.5px;top:13px"><span style="letter-spacing:0.342px;margin-left:-0.62px">Core Application</span></a></div>
<div class="row alt" style="top:655px;height:67px"><div class="cb" style="top:19.5px"></div><div class="dots" style="top:24px"><i></i><i></i><i></i></div><span class="t" style="left:166px;top:13px"><span style="letter-spacing:1.072px;margin-left:-0.43px">7089</span></span><a class="t lnk" style="left:335px;top:13px"><span style="letter-spacing:-0.175px;margin-left:-0.04px">API Endpoints</span></a><span class="ab" style="left:482.5px;top:17px"><span style="letter-spacing:0.440px;margin-left:10.43px">A</span></span><a class="t lnk" style="left:838.5px;top:13px"><span style="letter-spacing:0.342px;margin-left:-0.62px">Core Application</span></a></div>
<div class="row" style="top:722px;height:67px"><div class="cb" style="top:19.5px"></div><div class="dots" style="top:24px"><i></i><i></i><i></i></div><span class="t" style="left:166px;top:13px"><span style="letter-spacing:0.940px;margin-left:-0.43px">7084</span></span><a class="t lnk" style="left:335px;top:13px"><span style="letter-spacing:0.845px;margin-left:-0.93px">auth</span></a><span class="ab" style="left:389.0px;top:17px"><span style="letter-spacing:0.440px;margin-left:10.43px">A</span></span><a class="t lnk" style="left:838.5px;top:13px"><span style="letter-spacing:0.342px;margin-left:-0.62px">Core Application</span></a></div>
<div class="row alt" style="top:789px;height:67px"><div class="cb" style="top:19.5px"></div><div class="dots" style="top:24px"><i></i><i></i><i></i></div><span class="t" style="left:166px;top:13px"><span style="letter-spacing:0.173px;margin-left:-0.43px">7074</span></span><a class="t lnk" style="left:335px;top:13px"><span style="letter-spacing:-0.603px;margin-left:-1.47px">iOS</span></a><span class="ab" style="left:379.0px;top:17px"><span style="letter-spacing:0.440px;margin-left:10.43px">A</span></span><a class="t lnk" style="left:838.5px;top:13px"><span style="letter-spacing:0.342px;margin-left:-0.62px">Core Application</span></a></div>
<div class="row" style="top:856px;height:67px"><div class="cb" style="top:19.5px"></div><div class="dots" style="top:24px"><i></i><i></i><i></i></div><span class="t" style="left:166px;top:13px"><span style="letter-spacing:0.366px;margin-left:-0.43px">7075</span></span><a class="t lnk" style="left:335px;top:13px"><span style="letter-spacing:0.462px;margin-left:0.03px">webapp-admin</span></a><span class="ab" style="left:494.0px;top:17px"><span style="letter-spacing:0.440px;margin-left:10.43px">A</span></span><a class="t lnk" style="left:838.5px;top:13px"><span style="letter-spacing:0.342px;margin-left:-0.62px">Core Application</span></a></div>
<div class="row alt" style="top:923px;height:90px"><div class="cb" style="top:31.5px"></div><div class="dots" style="top:36px"><i></i><i></i><i></i></div><span class="t" style="left:166px;top:25px"><span style="letter-spacing:0.427px;margin-left:-0.43px">7077</span></span><a class="t lnk" style="left:335px;top:9px"><span style="letter-spacing:0.501px;margin-left:0.03px">webapp-backend</span></a><span class="ab" style="left:345px;top:42px"><span style="letter-spacing:0.440px;margin-left:10.43px">A</span></span><a class="t lnk" style="left:838.5px;top:25px"><span style="letter-spacing:0.342px;margin-left:-0.62px">Core Application</span></a></div>
<div class="row" style="top:1013px;height:91px"><div class="cb" style="top:31.5px"></div><div class="dots" style="top:36px"><i></i><i></i><i></i></div><span class="t" style="left:166px;top:25px"><span style="letter-spacing:-0.250px;margin-left:-0.43px">7071</span></span><a class="t lnk" style="left:335px;top:9px"><span style="letter-spacing:0.640px;margin-left:0.03px">webapp-frontend</span></a><span class="ab" style="left:345px;top:41.5px"><span style="letter-spacing:0.440px;margin-left:10.43px">A</span></span><a class="t lnk" style="left:838.5px;top:25px"><span style="letter-spacing:0.342px;margin-left:-0.62px">Core Application</span></a></div>

<svg class="abs" style="left:822.7px;top:1133.9px" width="15.6" height="12.6" viewBox="0 0 15.6 12.6" fill="none" stroke="#85858e" stroke-width="2" stroke-linecap="round" stroke-linejoin="round"><path d="M6.9 1 L1 6.3 L6.9 11.6 M14.6 1 L8.7 6.3 L14.6 11.6"/></svg>
<svg class="abs" style="left:884.6px;top:1133.9px" width="7.9" height="12.6" viewBox="0 0 7.9 12.6" fill="none" stroke="#85858e" stroke-width="2" stroke-linecap="round" stroke-linejoin="round"><path d="M6.9 1 L1 6.3 L6.9 11.6"/></svg>
<span class="t mut" style="left:919px;top:1120px"><span style="letter-spacing:0.256px;margin-left:0.42px">1 to 9 of 9</span></span>
<svg class="abs" style="left:1047.6px;top:1133.9px" width="7.9" height="12.6" viewBox="0 0 7.9 12.6" fill="none" stroke="#85858e" stroke-width="2" stroke-linecap="round" stroke-linejoin="round"><path d="M1 1 L6.9 6.3 L1 11.6"/></svg>
<svg class="abs" style="left:1101.8px;top:1133.9px" width="15.6" height="12.6" viewBox="0 0 15.6 12.6" fill="none" stroke="#85858e" stroke-width="2" stroke-linecap="round" stroke-linejoin="round"><path d="M1 1 L6.9 6.3 L1 11.6 M8.7 1 L14.6 6.3 L8.7 11.6"/></svg>
<div class="inp" style="left:1141px;top:1116.2px;width:108px;height:47px"></div>
<span class="t" style="left:1156px;top:1120px"><span style="letter-spacing:-0.749px;margin-left:0.32px">10</span></span>
<svg class="abs" style="left:1213.5px;top:1135.4px" width="18" height="10.4" viewBox="0 0 18 10.4" fill="none" stroke="#a1a1aa" stroke-width="2.1" stroke-linecap="round" stroke-linejoin="round"><path d="M1.2 1.2 L9 9 L16.8 1.2"/></svg>
<div class="hr" style="top:1177px"></div>

</main>
</div>
</body>
</html>
